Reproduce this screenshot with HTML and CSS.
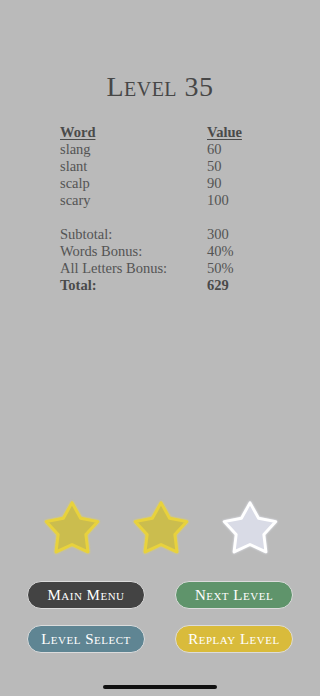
FILE: index.html
```html
<!DOCTYPE html>
<html>
	<head>
		<meta charset="UTF-8">
		<title>Level 35</title>
		<link rel="stylesheet" href="styles.css">
	</head>
	<body>
		<div class="wrap">
			<h1 class="title">Level 35</h1>

			<div class="score">
				<div class="head">Word</div>
				<div class="head">Value</div>
				<div>slang</div><div>60</div>
				<div>slant</div><div>50</div>
				<div>scalp</div><div>90</div>
				<div>scary</div><div>100</div>
				<div class="gap"></div><div class="gap"></div>
				<div>Subtotal:</div><div>300</div>
				<div>Words Bonus:</div><div>40%</div>
				<div>All Letters Bonus:</div><div>50%</div>
				<div class="bold">Total:</div><div class="bold">629</div>
			</div>

			<div class="bottom">
				<div class="stars">
					<svg class="star on" viewBox="0 0 64 62"><polygon points="32,4 40.82,19.86 58.63,23.35 46.27,36.64 48.46,54.65 32,47 15.54,54.65 17.73,36.64 5.37,23.35 23.18,19.86" /></svg>
					<svg class="star on" viewBox="0 0 64 62"><polygon points="32,4 40.82,19.86 58.63,23.35 46.27,36.64 48.46,54.65 32,47 15.54,54.65 17.73,36.64 5.37,23.35 23.18,19.86" /></svg>
					<svg class="star off" viewBox="0 0 64 62"><polygon points="32,4 40.82,19.86 58.63,23.35 46.27,36.64 48.46,54.65 32,47 15.54,54.65 17.73,36.64 5.37,23.35 23.18,19.86" /></svg>
				</div>
				<div class="buttons">
					<div class="btn dark">Main Menu</div>
					<div class="btn green">Next Level</div>
					<div class="btn blue">Level Select</div>
					<div class="btn yellow">Replay Level</div>
				</div>
				<div class="home"></div>
			</div>
		</div>
	</body>
</html>
```

FILE: styles.css
```css
* {
	margin: 0;
	padding: 0;
}

html,
body {
	width: 100%;
	height: 100%;
	background: #bababa;
}

.wrap {
	height: 696px;
	display: flex;
	flex-direction: column;
	font-family: "Liberation Serif", "DejaVu Serif", serif;
	color: #545454;
}

.title {
	margin-top: 70px;
	text-align: center;
	font-weight: normal;
	font-size: 28px;
	line-height: 34px;
	font-variant: small-caps;
	letter-spacing: 0.5px;
	color: #474747;
}

.score {
	margin-top: 20px;
	padding-left: 60px;
	display: grid;
	grid-template-columns: 147px auto;
	font-size: 14.5px;
	line-height: 17px;
}

.score .head {
	font-weight: bold;
	text-decoration: underline;
	text-underline-offset: 2px;
	color: #4a4a4a;
}

.score .bold {
	font-weight: bold;
	color: #4a4a4a;
}

.score .gap {
	height: 17px;
}

.bottom {
	margin-top: auto;
	display: flex;
	flex-direction: column;
	align-items: center;
}

.stars {
	display: flex;
	gap: 27px;
	margin-left: 1px;
}

.star {
	width: 62px;
	height: 60px;
}

.star polygon {
	stroke-linejoin: round;
	stroke-width: 3;
}

.star.on polygon {
	fill: #cbbd4e;
	stroke: #e8d23c;
	filter: drop-shadow(0 0 1px #e9d64a);
}

.star.off polygon {
	fill: #d9dbe6;
	stroke: #ffffff;
	filter: drop-shadow(0 0 1px #e4e6f0);
}

.buttons {
	margin-top: 22px;
	width: 266px;
	display: grid;
	grid-template-columns: 118px 118px;
	column-gap: 30px;
	row-gap: 16px;
}

.btn {
	height: 26px;
	border: 1.5px solid #dcdcdc;
	border-radius: 15px;
	display: flex;
	align-items: center;
	justify-content: center;
	color: #ffffff;
	font-size: 15px;
	font-variant: small-caps;
	letter-spacing: 0.5px;
}

.dark {
	background: #434343;
}

.green {
	background: #5f946b;
}

.blue {
	background: #5f8593;
}

.yellow {
	background: #d9bb3b;
}

.home {
	margin-top: 32px;
	margin-bottom: 7px;
	width: 114px;
	height: 4px;
	border-radius: 2px;
	background: #111111;
}
```
